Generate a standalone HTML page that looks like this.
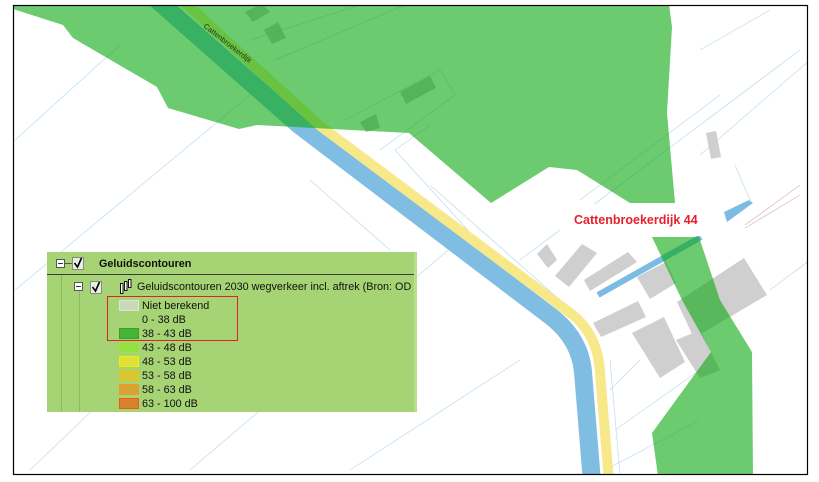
<!DOCTYPE html>
<html><head><meta charset="utf-8"><style>
html,body{margin:0;padding:0;background:#fff;width:819px;height:482px;overflow:hidden}
svg{position:absolute;left:0;top:0}
.t{font-family:"Liberation Sans",sans-serif;font-size:10.8px;fill:#111}
</style></head><body>
<svg width="819" height="482" viewBox="0 0 819 482" xmlns="http://www.w3.org/2000/svg">
<defs><clipPath id="c"><rect x="13" y="5" width="794" height="469"/></clipPath></defs>
<g clip-path="url(#c)">
<rect x="0" y="0" width="819" height="482" fill="#fff"/>
<g stroke="#bcdcf1" stroke-width="0.7" fill="none">
<path d="M15,140 L120,45"/><path d="M15,290 L250,95"/><path d="M30,470 L250,260"/>
<path d="M190,470 L460,240"/><path d="M350,470 L520,360"/><path d="M310,180 L390,250"/>
<path d="M395,150 L495,260"/><path d="M430,185 L560,300"/><path d="M395,150 L430,125"/>
<path d="M520,260 L640,170"/><path d="M580,200 L720,95"/><path d="M640,170 L800,50"/>
<path d="M700,155 L810,60"/><path d="M735,165 L750,200"/><path d="M770,290 L810,260"/>
<path d="M610,390 L640,360"/><path d="M615,430 L700,370"/><path d="M605,470 L700,420"/>
<path d="M610,360 L620,474"/><path d="M700,50 L770,10"/><path d="M250,40 L360,5"/>
<path d="M275,60 L405,5"/><path d="M345,120 L440,70 L455,95 L380,150"/>
</g>
<path d="M745,225 L800,185 M745,228 L800,195" stroke="#d9b7b7" stroke-width="0.7"/>
<g fill="#cfcfcf">
<polygon points="706,133 716,131 721,157 711,159"/>
<polygon points="537,254 547,244 557,260 548,268"/>
<polygon points="555,276 582,244 597,253 569,287"/>
<polygon points="584,280 628,252 637,262 590,291"/>
<polygon points="637,277 666,262 676,283 650,299"/>
<polygon points="593,323 638,301 646,317 601,337"/>
<polygon points="632,333 664,317 685,362 660,378"/>
<polygon points="677,302 744,258 767,295 694,338"/>
<polygon points="676,340 700,330 720,370 700,378"/>
</g>
<path d="M598,295 L701,237" stroke="#7dbce2" stroke-width="6"/>
<polygon points="724,212 749,200 753,203 727,222" fill="#7dbce2"/>
<path d="M157,0 L299,125 L553,318 Q580,340 583,372 L592,482" stroke="#80bde2" stroke-width="18" fill="none"/>
<path d="M182,0 L319,125 L573,315 Q598,336 600,372 L609,482" stroke="#f7e98a" stroke-width="10" fill="none"/>
<g fill="#0aa80f" fill-opacity="0.6">
<polygon points="13,4 669,4 672,27 667,113 675,203 630,203 577,170 549,167 491,203 409,133 257,125 239,129 168,108 157,87 73,38 63,25 13,9"/>
<polygon points="652,237 699,237 720,300 752,352 753,476 658,476 652,433 711,352 682,300"/>
</g>
<g fill="#3a9a3d" fill-opacity="0.45">
<polygon points="245,12 262,4 270,12 253,22"/>
<polygon points="264,30 278,22 286,38 272,44"/>
<polygon points="400,92 430,76 436,88 406,104"/>
<polygon points="360,122 376,114 380,128 366,132"/>
</g>
<text x="0" y="0" transform="translate(203,27) rotate(38)" font-family="Liberation Sans,sans-serif" font-size="7.5" fill="#1f3a1f">Cattenbroekerdijk</text>
<rect x="560" y="204" width="158" height="32" fill="#fff"/>
<text x="574" y="224" font-family="Liberation Sans,sans-serif" font-size="12.5" font-weight="bold" fill="#e8202a">Cattenbroekerdijk 44</text>
<rect x="47" y="252" width="370" height="160" fill="#a6d374"/>
<rect x="414" y="252" width="3" height="160" fill="#b8dd8c"/>
<line x1="47" y1="274.5" x2="414" y2="274.5" stroke="#3a3a3a" stroke-width="1"/>
<line x1="61.5" y1="275" x2="61.5" y2="412" stroke="#8bbb5c"/>
<line x1="79.5" y1="290" x2="79.5" y2="412" stroke="#8bbb5c"/>
<rect x="56.5" y="259.5" width="8" height="8" fill="#fff" stroke="#555"/><line x1="58" y1="263.5" x2="63" y2="263.5" stroke="#333"/>
<line x1="65" y1="263.5" x2="72" y2="263.5" stroke="#555"/>
<rect x="72.5" y="257.5" width="11" height="12" fill="#e8eee2" stroke="#888"/>
<path d="M74.5,263 L77.5,267 L81.5,258" stroke="#000" stroke-width="1.6" fill="none"/>
<text class="t" x="99" y="267" font-weight="bold">Geluidscontouren</text>
<rect x="74.5" y="282.5" width="8" height="8" fill="#fff" stroke="#555"/><line x1="76" y1="286.5" x2="81" y2="286.5" stroke="#333"/>
<rect x="90.5" y="281.5" width="11" height="12" fill="#e8eee2" stroke="#888"/>
<path d="M92.5,287 L95.5,291 L99.5,282" stroke="#000" stroke-width="1.6" fill="none"/>
<g stroke="#111" stroke-width="1" fill="#fff">
<rect x="120.5" y="283.5" width="2.5" height="10"/><rect x="124.5" y="281.5" width="2.5" height="9"/><rect x="128.5" y="279.5" width="2.5" height="8"/>
</g>
<text class="t" x="137" y="290">Geluidscontouren 2030 wegverkeer incl. aftrek (Bron: OD</text>
<rect x="107.5" y="296.5" width="130" height="44" fill="none" stroke="#e0202a" stroke-width="1"/>
<rect x="119.5" y="300.5" width="19" height="10" fill="#c9d8b8" stroke="#dde6d2"/>
<text class="t" x="142" y="309">Niet berekend</text>
<text class="t" x="142" y="323">0 - 38 dB</text>
<rect x="119.5" y="328.5" width="19" height="10" fill="#44b534" stroke="#3aa02a"/>
<text class="t" x="142" y="337">38 - 43 dB</text>
<rect x="119.5" y="342.5" width="19" height="10" fill="#94e043" stroke="#9be54a"/>
<text class="t" x="142" y="351">43 - 48 dB</text>
<rect x="119.5" y="356.5" width="19" height="10" fill="#dfe03a" stroke="#f2f000"/>
<text class="t" x="142" y="365">48 - 53 dB</text>
<rect x="119.5" y="370.5" width="19" height="10" fill="#d7c732" stroke="#e8c420"/>
<text class="t" x="142" y="379">53 - 58 dB</text>
<rect x="119.5" y="384.5" width="19" height="10" fill="#d8a331" stroke="#f09a20"/>
<text class="t" x="142" y="393">58 - 63 dB</text>
<rect x="119.5" y="398.5" width="19" height="10" fill="#d6822f" stroke="#f05a10"/>
<text class="t" x="142" y="407">63 - 100 dB</text>
</g>
<rect x="13.5" y="5.5" width="794" height="469" fill="none" stroke="#000" stroke-width="1.2"/>
</svg>
</body></html>
